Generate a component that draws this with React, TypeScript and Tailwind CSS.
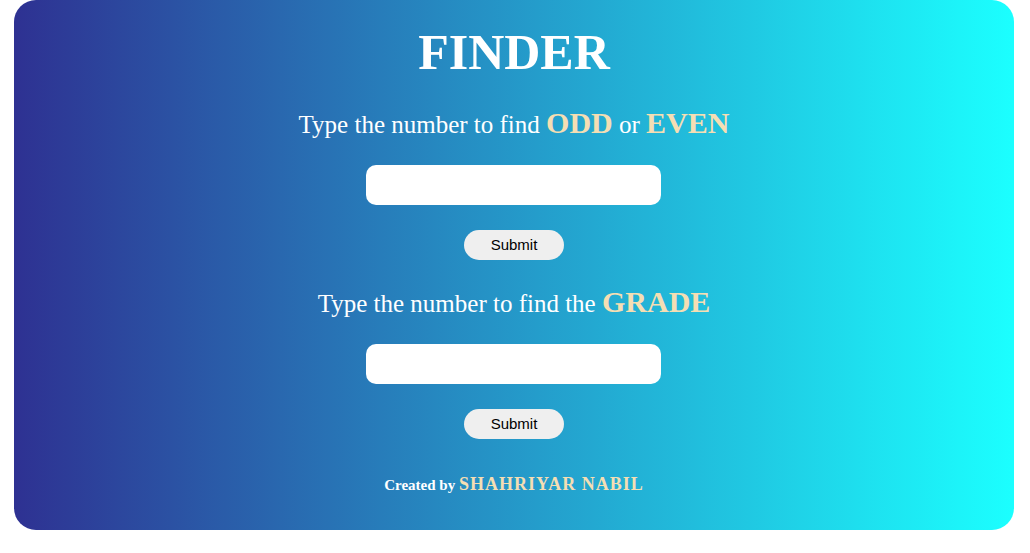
import React from 'react';

const serif = "font-['Liberation_Serif','Times_New_Roman',serif]";

const Finder = ({ children }: { children: React.ReactNode }) => (
  <div className="flex flex-col items-center">
    <p className="pt-[2px] text-[25px] leading-[30px] text-white">{children}</p>
    <input
      type="text"
      className="mt-[25px] h-[40px] w-[295px] rounded-[10px] bg-white outline-none"
    />
    <button className="mt-[25px] h-[30px] w-[100px] rounded-full bg-[#efefef] font-['Liberation_Sans',Arial,sans-serif] text-[15px] text-black">
      Submit
    </button>
  </div>
);

const App = () => {
  return (
    <div className="min-h-[553px] bg-white">
      <div
        className={`ml-[14px] flex h-[530px] w-[1000px] flex-col items-center rounded-[22px] bg-[linear-gradient(to_right,#2e3192,#1bffff)] ${serif}`}
      >
        <h1 className="mt-[24px] text-[50px] font-bold leading-[56px] text-white">FINDER</h1>

        <div className="mt-[26px] flex flex-col items-center gap-[25px]">
          <Finder>
            Type the number to find{' '}
            <span className="text-[30px] font-bold text-[#f5deb3]">ODD</span> or{' '}
            <span className="text-[30px] font-bold text-[#f5deb3]">EVEN</span>
          </Finder>
          <Finder>
            Type the number to find the{' '}
            <span className="text-[30px] font-bold text-[#f5deb3]">GRADE</span>
          </Finder>
        </div>

        <p className="mt-[32px] text-[15px] font-bold text-white">
          Created by{' '}
          <span className="text-[18px] tracking-[1px] text-[#f5deb3]">SHAHRIYAR NABIL</span>
        </p>
      </div>
    </div>
  );
};

export default App;
